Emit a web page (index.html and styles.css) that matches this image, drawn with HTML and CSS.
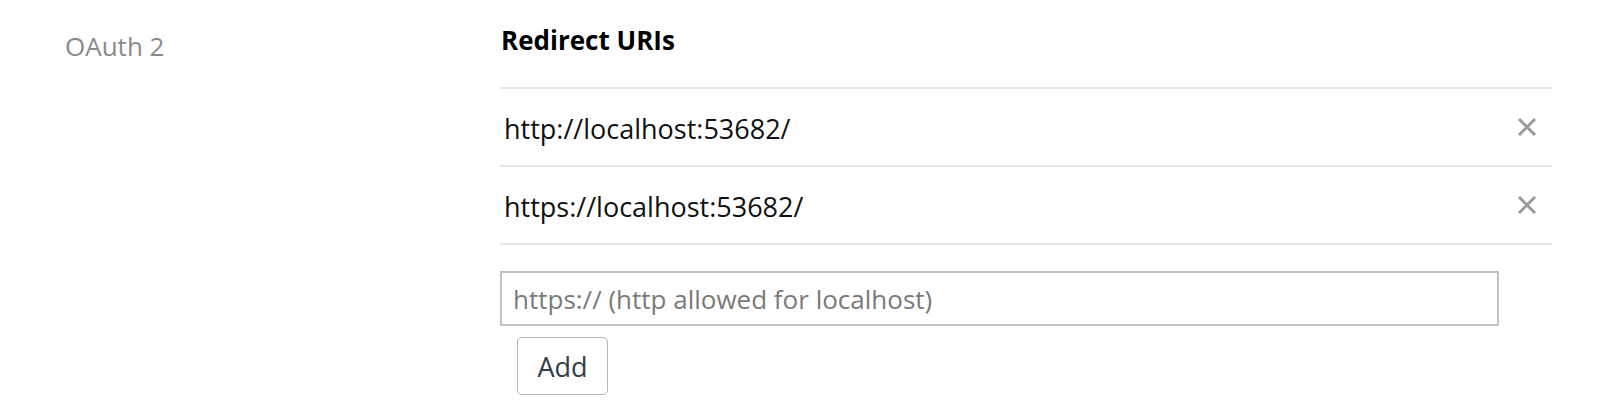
FILE: index.html
```html
<!DOCTYPE html>
<html>
<head>
<meta charset="utf-8">
<link rel="stylesheet" href="styles.css">
</head>
<body>
<div class="section">
  <div class="label">OAuth 2</div>
  <div class="content">
    <h3 class="heading">Redirect URIs</h3>
    <ul class="uri-list">
      <li class="uri-row">
        <span class="uri">http://localhost:53682/</span>
        <button class="remove" aria-label="Remove">
          <svg width="22" height="22" viewBox="0 0 22 22"><path d="M3 3 L19 19 M19 3 L3 19" stroke="#9a9a9a" stroke-width="3" stroke-linecap="butt" fill="none"/></svg>
        </button>
      </li>
      <li class="uri-row">
        <span class="uri">https://localhost:53682/</span>
        <button class="remove" aria-label="Remove">
          <svg width="22" height="22" viewBox="0 0 22 22"><path d="M3 3 L19 19 M19 3 L3 19" stroke="#9a9a9a" stroke-width="3" stroke-linecap="butt" fill="none"/></svg>
        </button>
      </li>
    </ul>
    <input class="uri-input" type="text" placeholder="https:// (http allowed for localhost)">
    <button class="add-btn">Add</button>
  </div>
</div>
</body>
</html>
```

FILE: styles.css
```css
html, body {
  margin: 0;
  padding: 0;
  background: #ffffff;
}
body {
  font-family: "Open Sans", "Noto Sans", sans-serif;
  color: #111111;
}
.section {
  display: flex;
  padding-top: 24px;
}
.label {
  width: 435px;
  padding-left: 65px;
  font-size: 26px;
  line-height: 32px;
  color: #8a8a8a;
  padding-top: 6px;
}
.content {
  width: 1052px;
  display: flex;
  flex-direction: column;
  align-items: flex-start;
}
.heading {
  margin: 0;
  font-size: 26px;
  line-height: 32px;
  font-weight: 700;
  color: #000;
  padding-left: 1px;
  height: 63px;
}
.uri-list {
  list-style: none;
  margin: 0;
  padding: 0;
  width: 100%;
  border-top: 2px solid #e5e5e5;
}
.uri-row {
  display: flex;
  align-items: center;
  justify-content: space-between;
  padding: 24px 14px 20px 4px;
  border-bottom: 2px solid #e5e5e5;
}
.uri {
  font-size: 27px;
  line-height: 32px;
  color: #111;
}
.remove {
  border: 0;
  background: none;
  padding: 0;
  margin: -4px 0 0 0;
  width: 22px;
  height: 22px;
  display: flex;
}
.uri-input {
  margin-top: 26px;
  box-sizing: border-box;
  width: 999px;
  height: 55px;
  border: 2px solid #c2c2c2;
  border-radius: 0;
  padding: 0 11px;
  font-family: "Open Sans", "Noto Sans", sans-serif;
  font-size: 26px;
  color: #111;
  outline: none;
}
.uri-input::placeholder {
  color: #7a7a7a;
}
.add-btn {
  margin: 11px 0 0 17px;
  box-sizing: border-box;
  width: 91px;
  height: 58px;
  border: 1.5px solid #b5b5b5;
  border-radius: 5px;
  background: #fff;
  font-family: "Open Sans", "Noto Sans", sans-serif;
  font-size: 27px;
  font-weight: 500;
  color: #333e4b;
  padding: 0;
}
```
